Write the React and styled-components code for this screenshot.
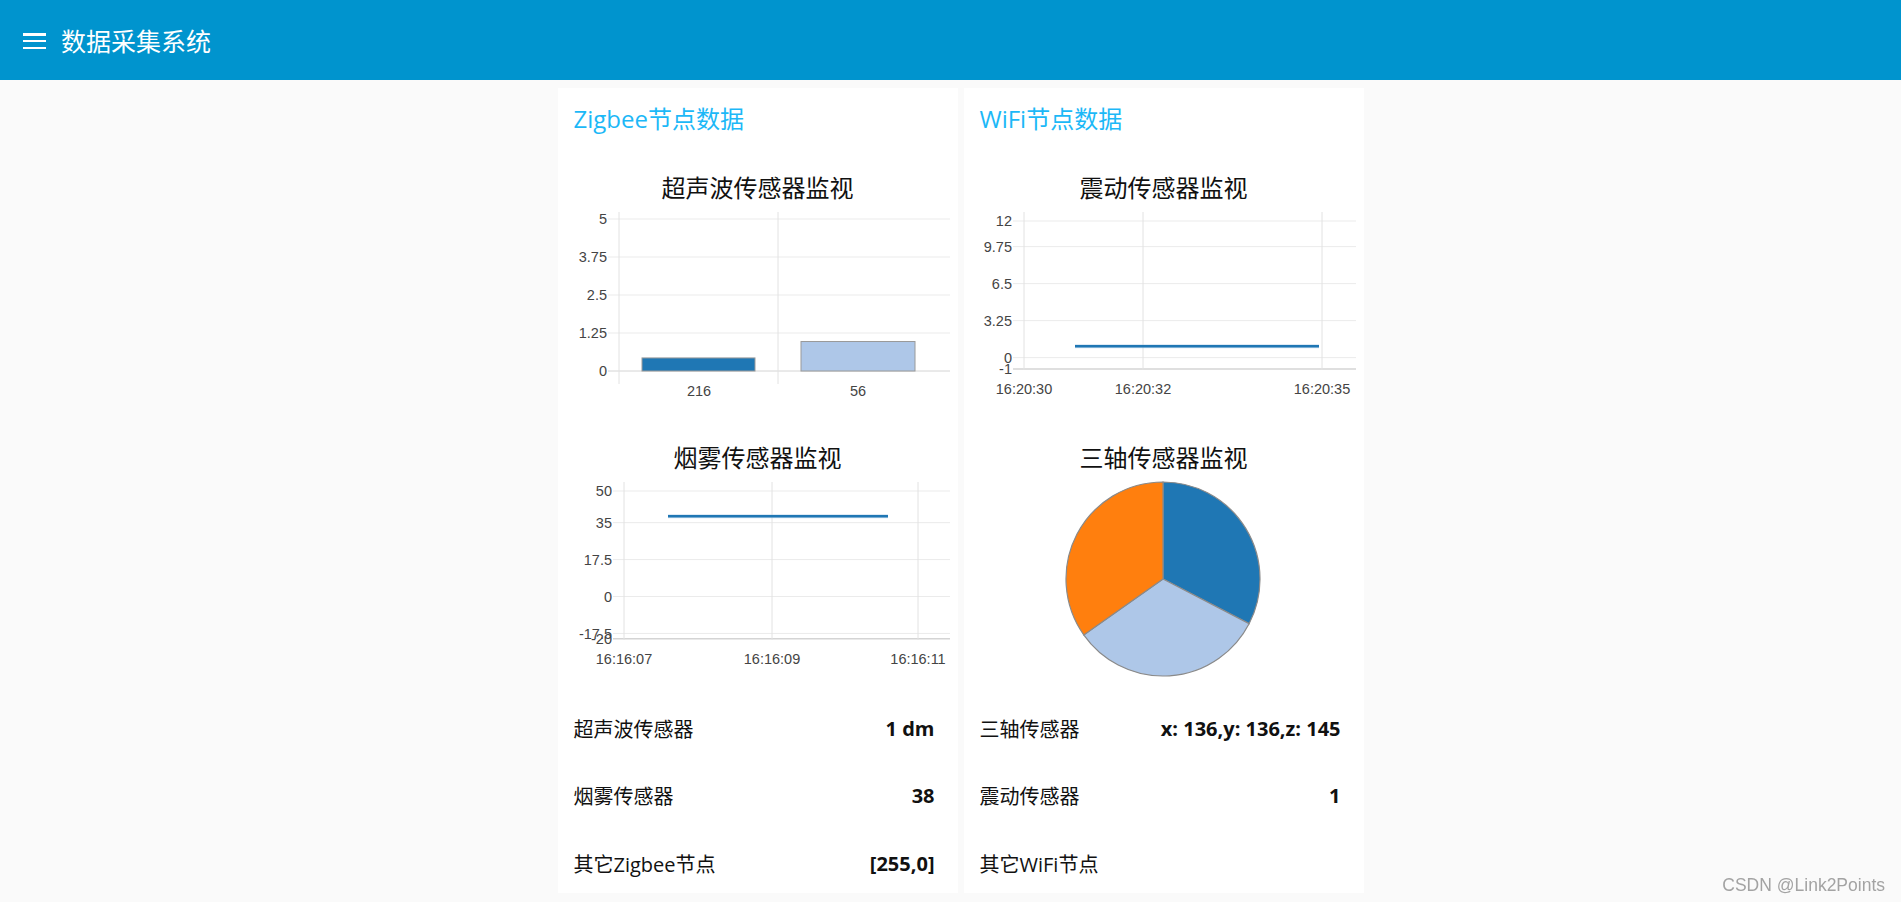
import React from 'react';
import styled, { createGlobalStyle } from 'styled-components';

const GlobalStyle = createGlobalStyle`
  html, body { margin: 0; padding: 0; background: #fafafa; }
  body {
    font-family: "Open Sans", "Noto Sans CJK SC", sans-serif;
    color: #111;
  }
`;

const Page = styled.div`
  min-height: 902px;
  display: flex;
  flex-direction: column;
`;

const Toolbar = styled.header`
  height: 80px;
  background: #0094ce;
  display: flex;
  align-items: center;
  gap: 15px;
  padding-left: 23px;
  color: #fff;
`;

const MenuButton = styled.span`
  display: flex;
  flex-direction: column;
  justify-content: space-between;
  width: 23px;
  height: 16px;
  margin-top: 2px;
`;

const MenuBar = styled.span`
  display: block;
  height: 2.5px;
  background: #fff;
`;

const ToolbarTitle = styled.h1`
  margin: 0;
  font-family: "Noto Sans CJK SC", sans-serif;
  font-size: 25px;
  font-weight: 400;
  line-height: 34px;
`;

const Main = styled.main`
  display: flex;
  justify-content: center;
  align-items: flex-start;
  gap: 6px;
  padding: 8px 0 0 20px;
`;

const Card = styled.section`
  width: 400px;
  background: #fff;
  display: flex;
  flex-direction: column;
`;

const CardTitle = styled.h2`
  margin: 0;
  height: 70px;
  box-sizing: border-box;
  padding: 14px 16px 0;
  font-size: 24px;
  font-weight: 400;
  line-height: 34px;
  color: #1cb8f7;
`;

const ChartBlock = styled.div`
  height: 262px;
  display: flex;
  flex-direction: column;
  & + & { margin-top: 8px; }
`;

const ChartTitle = styled.div`
  margin-top: 9px;
  height: 40px;
  line-height: 40px;
  text-align: center;
  font-family: "Noto Sans CJK SC", sans-serif;
  font-size: 24px;
  color: #111;
`;

const ChartSvg = styled.svg`
  display: block;
  width: 400px;
  height: 213px;
  font-family: "Liberation Sans", Arial, sans-serif;
  font-size: 14.5px;
  fill: #444;
`;

const RowList = styled.div`
  margin-top: 8px;
  display: flex;
  flex-direction: column;
  gap: 7.5px;
`;

const Row = styled.div`
  height: 60px;
  display: flex;
  align-items: center;
  justify-content: space-between;
  padding: 0 23px 0 16px;
  font-size: 20px;
`;

const RowLabel = styled.span`
  font-weight: 400;
`;

const RowValue = styled.span`
  font-weight: 700;
`;

const Watermark = styled.div`
  position: fixed;
  right: 16px;
  bottom: 6px;
  font-family: "Liberation Sans", Arial, sans-serif;
  font-size: 17.5px;
  color: #a3a3a3;
`;

const GRID = '#ebebeb';
const VGRID = '#e2e2e2';
const AXIS = '#d4d4d4';

function BarChart() {
  const yTop = 12, yBottom = 164, max = 5;
  const y = (v) => yBottom - (v / max) * (yBottom - yTop);
  const ticks = [5, 3.75, 2.5, 1.25, 0];
  const bars = [
    { x: 84, w: 113, v: 0.43, fill: '#1f77b4', label: '216', cx: 141 },
    { x: 243, w: 114, v: 0.97, fill: '#aec7e8', label: '56', cx: 300 },
  ];
  return (
    <ChartSvg viewBox="0 0 400 213">
      {ticks.map((t) => (
        <line key={t} x1={50} x2={392} y1={y(t)} y2={y(t)} stroke={t === 0 ? AXIS : GRID} strokeWidth={1} />
      ))}
      {[61, 220].map((x) => (
        <line key={x} x1={x} x2={x} y1={5} y2={177} stroke={VGRID} strokeWidth={1} />
      ))}
      {ticks.map((t) => (
        <text key={'l' + t} x={49} y={y(t)} dy="0.35em" textAnchor="end">{t}</text>
      ))}
      {bars.map((b) => (
        <rect key={b.label} x={b.x} y={y(b.v)} width={b.w} height={yBottom - y(b.v)} fill={b.fill} stroke="#9a9a9a" strokeWidth={1} />
      ))}
      {bars.map((b) => (
        <text key={'x' + b.label} x={b.cx} y={184} dy="0.35em" textAnchor="middle">{b.label}</text>
      ))}
    </ChartSvg>
  );
}

function LineChart({ ticks, min, max, yTop, yBottom, axisX, xTicks, line, labelEnd }) {
  const y = (v) => yBottom - ((v - min) / (max - min)) * (yBottom - yTop);
  return (
    <ChartSvg viewBox="0 0 400 213">
      {ticks.map((t) => (
        <line key={t} x1={axisX - 11} x2={392} y1={y(t)} y2={y(t)} stroke={t === min ? AXIS : GRID} strokeWidth={t === min ? 1.5 : 1} />
      ))}
      {xTicks.map((xt) => (
        <line key={xt.x} x1={xt.x} x2={xt.x} y1={5} y2={163} stroke={VGRID} strokeWidth={1} />
      ))}
      {ticks.map((t) => (
        <text key={'l' + t} x={labelEnd} y={y(t)} dy="0.35em" textAnchor="end">{t}</text>
      ))}
      <line x1={line.x1} x2={line.x2} y1={y(line.v)} y2={y(line.v)} stroke="#a9c9e6" strokeWidth={4} strokeOpacity={0.5} />
      <line x1={line.x1} x2={line.x2} y1={y(line.v)} y2={y(line.v)} stroke="#1f77b4" strokeWidth={2.5} />
      {xTicks.map((xt) => (
        <text key={'x' + xt.x} x={xt.x} y={182} dy="0.35em" textAnchor="middle">{xt.label}</text>
      ))}
    </ChartSvg>
  );
}

function PieChart({ values, colors }) {
  const cx = 199, cy = 102, r = 97;
  const total = values.reduce((a, b) => a + b, 0);
  let acc = 0;
  const pt = (a) => [cx + r * Math.sin(a), cy - r * Math.cos(a)];
  const slices = values.map((v, i) => {
    const a0 = (acc / total) * Math.PI * 2;
    acc += v;
    const a1 = (acc / total) * Math.PI * 2;
    const [x0, y0] = pt(a0);
    const [x1, y1] = pt(a1);
    const large = a1 - a0 > Math.PI ? 1 : 0;
    return (
      <path
        key={i}
        d={`M${cx},${cy} L${x0},${y0} A${r},${r} 0 ${large} 1 ${x1},${y1} Z`}
        fill={colors[i]}
        stroke="#8a8a8a"
        strokeWidth={1.2}
      />
    );
  });
  return <ChartSvg viewBox="0 0 400 213">{slices}</ChartSvg>;
}

const zigbeeRows = [
  { label: '超声波传感器', value: '1 dm' },
  { label: '烟雾传感器', value: '38' },
  { label: '其它Zigbee节点', value: '[255,0]' },
];

const wifiRows = [
  { label: '三轴传感器', value: 'x: 136,y: 136,z: 145' },
  { label: '震动传感器', value: '1' },
  { label: '其它WiFi节点', value: '' },
];

export default function App() {
  return (
    <Page>
      <GlobalStyle />
      <Toolbar>
        <MenuButton>
          <MenuBar />
          <MenuBar />
          <MenuBar />
        </MenuButton>
        <ToolbarTitle>数据采集系统</ToolbarTitle>
      </Toolbar>
      <Main>
        <Card>
          <CardTitle>Zigbee节点数据</CardTitle>
          <ChartBlock>
            <ChartTitle>超声波传感器监视</ChartTitle>
            <BarChart />
          </ChartBlock>
          <ChartBlock>
            <ChartTitle>烟雾传感器监视</ChartTitle>
            <LineChart
              ticks={[50, 35, 17.5, 0, -17.5, -20]}
              min={-20}
              max={50}
              yTop={14}
              yBottom={161.7}
              axisX={66}
              labelEnd={54}
              xTicks={[
                { x: 66, label: '16:16:07' },
                { x: 214, label: '16:16:09' },
                { x: 360, label: '16:16:11' },
              ]}
              line={{ x1: 110, x2: 330, v: 38 }}
            />
          </ChartBlock>
          <RowList>
            {zigbeeRows.map((r) => (
              <Row key={r.label}>
                <RowLabel>{r.label}</RowLabel>
                <RowValue>{r.value}</RowValue>
              </Row>
            ))}
          </RowList>
        </Card>
        <Card>
          <CardTitle>WiFi节点数据</CardTitle>
          <ChartBlock>
            <ChartTitle>震动传感器监视</ChartTitle>
            <LineChart
              ticks={[12, 9.75, 6.5, 3.25, 0, -1]}
              min={-1}
              max={12}
              yTop={14}
              yBottom={162}
              axisX={60}
              labelEnd={48}
              xTicks={[
                { x: 60, label: '16:20:30' },
                { x: 179, label: '16:20:32' },
                { x: 358, label: '16:20:35' },
              ]}
              line={{ x1: 111, x2: 355, v: 1 }}
            />
          </ChartBlock>
          <ChartBlock>
            <ChartTitle>三轴传感器监视</ChartTitle>
            <PieChart values={[136, 136, 145]} colors={['#1f77b4', '#aec7e8', '#ff7f0e']} />
          </ChartBlock>
          <RowList>
            {wifiRows.map((r) => (
              <Row key={r.label}>
                <RowLabel>{r.label}</RowLabel>
                <RowValue>{r.value}</RowValue>
              </Row>
            ))}
          </RowList>
        </Card>
      </Main>
      <Watermark>CSDN @Link2Points</Watermark>
    </Page>
  );
}
